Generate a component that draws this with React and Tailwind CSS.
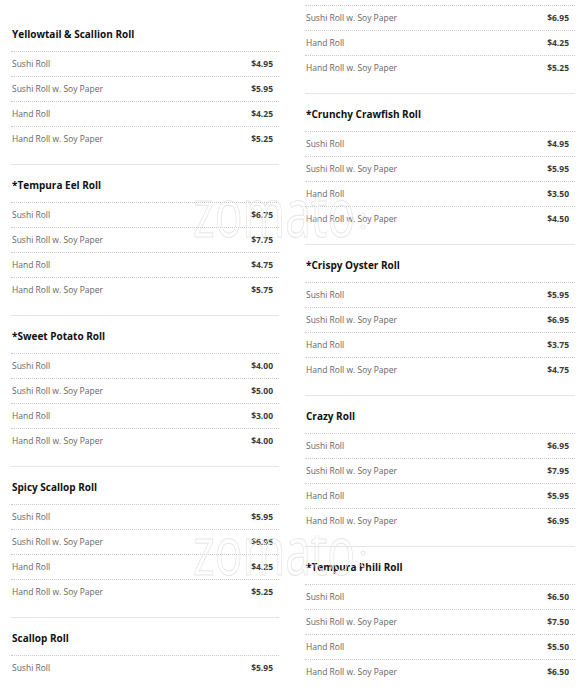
import React from "react";

const LABELS = ["Sushi Roll", "Sushi Roll w. Soy Paper", "Hand Roll", "Hand Roll w. Soy Paper"];

const LEFT = [
  { title: "Yellowtail & Scallion Roll", prices: ["$4.95", "$5.95", "$4.25", "$5.25"] },
  { title: "*Tempura Eel Roll", prices: ["$6.75", "$7.75", "$4.75", "$5.75"] },
  { title: "*Sweet Potato Roll", prices: ["$4.00", "$5.00", "$3.00", "$4.00"] },
  { title: "Spicy Scallop Roll", prices: ["$5.95", "$6.95", "$4.25", "$5.25"] },
  { title: "Scallop Roll", prices: ["$5.95"] },
];

const RIGHT = [
  { title: "Spicy Yellowtail Roll", prices: ["$5.95", "$6.95", "$4.25", "$5.25"] },
  { title: "*Crunchy Crawfish Roll", prices: ["$4.95", "$5.95", "$3.50", "$4.50"] },
  { title: "*Crispy Oyster Roll", prices: ["$5.95", "$6.95", "$3.75", "$4.75"] },
  { title: "Crazy Roll", prices: ["$6.95", "$7.95", "$5.95", "$6.95"] },
  { title: "*Tempura Phili Roll", prices: ["$6.50", "$7.50", "$5.50", "$6.50"] },
];

function Section({ title, prices, first }) {
  return (
    <div className={"border-t pt-[12px] pb-[13px] " + (first ? "border-transparent" : "border-[#e4e4e4]")}>
      <h3 className="h-[16px] leading-[16px] text-[10px] font-bold text-[#111] pl-[1px] mb-[9px]">{title}</h3>
      {prices.map((p, i) => (
        <div
          key={LABELS[i]}
          className="h-[25px] border-t border-dotted border-[#c8c8c8] flex items-center justify-between pl-[1px] pr-[6px]"
        >
          <span className="text-[8.5px] text-[#666]">{LABELS[i]}</span>
          <span className="text-[8.5px] font-bold text-[#3a3a3a]">{p}</span>
        </div>
      ))}
    </div>
  );
}

function Watermark({ top }) {
  return (
    <svg
      className="absolute pointer-events-none"
      style={{ left: 191, top }}
      width="182"
      height="50"
      viewBox="0 0 182 50"
    >
      <text
        x="2"
        y="40"
        fontFamily="'Open Sans', sans-serif"
        fontSize="68"
        textLength="162"
        lengthAdjust="spacingAndGlyphs"
        fill="none"
        stroke="#e6e6e6"
        strokeWidth="1"
      >
        zomato
      </text>
      <circle cx="172" cy="18" r="2" fill="none" stroke="#e6e6e6" />
      <circle cx="172" cy="30" r="2" fill="none" stroke="#e6e6e6" />
    </svg>
  );
}

export default function App() {
  return (
    <div className="relative w-[584px] h-[700px] overflow-hidden bg-white font-['Open_Sans',sans-serif]">
      <div className="flex pl-[11px] gap-[26px]">
        <div className="w-[268px] pt-[13px] shrink-0">
          {LEFT.map((s, i) => (
            <Section key={s.title} {...s} first={i === 0} />
          ))}
        </div>
        <div className="w-[270px] -mt-[58px] shrink-0">
          {RIGHT.map((s) => (
            <Section key={s.title} {...s} />
          ))}
        </div>
      </div>
      <Watermark top={197} />
      <Watermark top={535} />
    </div>
  );
}
